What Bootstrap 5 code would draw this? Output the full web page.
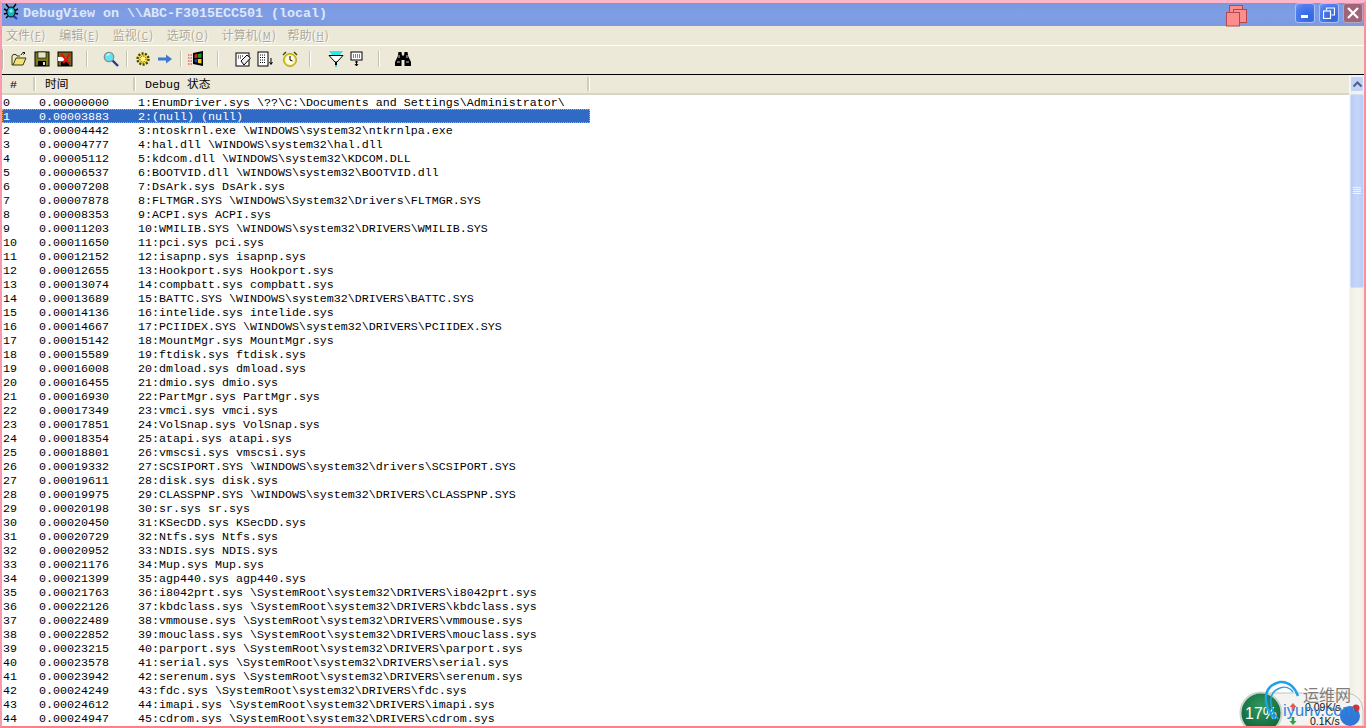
<!DOCTYPE html>
<html lang="zh-CN">
<head>
<meta charset="utf-8">
<title>DebugView</title>
<link href="https://cdn.jsdelivr.net/npm/bootstrap@5.3.0/dist/css/bootstrap.min.css" rel="stylesheet">
<style>
html,body{height:100%;overflow:hidden;background:#fff}
.dv-window{height:728px;width:1366px;position:relative;overflow:hidden;background:#ece9d8;border-style:solid;border-width:3px 2px 2px 2px;border-color:#fcb6cb #fb8f9c #ff7f86 #fb9aae;font-family:"Liberation Mono","Noto Sans CJK SC",monospace;color:#000}
.dv-title{height:23px;flex:none;background:linear-gradient(180deg,#7b98df 0%,#7e9ee6 50%,#7c99e0 100%);padding-left:1px;padding-right:1px}
.dv-title-text{font-size:13.33px;font-weight:700;color:#dfe7fb;margin-left:3px;line-height:22px;white-space:nowrap}
.dv-stack{position:absolute;left:1224px;top:2px}
.dv-cap{width:20px;height:20px;border:1px solid #a9c0f0;border-radius:3px;background:radial-gradient(circle at 70% 75%,#2f63e0,#4f7df0 70%,#7f9ff0);display:flex;align-items:center;justify-content:center}
.dv-cap-close{background:#a06479;border-color:#b9a5bc}
.dv-menu{height:19px;flex:none;font-family:"Noto Sans CJK SC",sans-serif;font-size:12px;line-height:18px;color:#aca899;text-shadow:1px 1px 0 #fff;padding-left:4px}
.dv-mi{margin-right:13.5px;white-space:nowrap}
.dv-mi u{font-size:10px;padding:0 1px}
.dv-mi-w{margin-right:11.5px}
.dv-tools{height:29px;flex:none;border-top:1px solid #fff;padding:0 0 3px 1px;align-items:center}
.dv-grip{width:1px;height:20px;background:#fff;margin-right:7px;box-shadow:-1px 0 0 #bdb9a5}
.dv-sep{width:2px;height:16px;background:#c5c2b2;border-right:1px solid #fff;flex:none}
.dv-tools svg{flex:none}
.tg5{margin-left:5px}.tg6{margin-left:6px}.tg7{margin-left:7px}.tg9{margin-left:9px}.tg11{margin-left:11px}.tg13{margin-left:13px}.tg15{margin-left:15px}.tg16{margin-left:16px}.tg17{margin-left:17px}
.dv-main{border-top:1px solid #000;min-height:0}
.dv-head{height:20px;font-size:11.67px;border-bottom:2px solid #d8d5c4;flex:none}
.dv-hc{flex:none;height:14px;margin-top:2px;line-height:16px;border-right:2px solid #d0cdbc;box-shadow:1px 0 0 #fff;white-space:nowrap}
.dv-hc-a{width:33px;padding-left:8px}
.dv-hc-b{width:100px;padding-left:10px}
.dv-hc-c{width:454px;padding-left:10px}
.dv-list{background:#fff;min-height:0;overflow:hidden}
.dv-table{width:588px;table-layout:fixed;margin:0;--bs-table-bg:transparent;font-size:11.67px;line-height:12px}
.dv-table td{padding:2px 0 0;height:14px;white-space:nowrap;color:#000;border:0;box-shadow:none}
.dv-table td:nth-child(1){width:36px;padding-left:1px}
.dv-table td:nth-child(2){width:100px;padding-left:1px}
.dv-table tr.dv-sel td{background:#316ac5;color:#fff}
.dv-table tr.dv-sel{outline:1px dotted #e6a24c;outline-offset:-1px}
.dv-scroll{width:15px;flex:none;background:linear-gradient(90deg,#f1efe4,#f7f6ee 60%,#efede1);border-left:1px solid #f8f7f0}
.dv-sb-btn{height:16px;margin-top:1px;border:1px solid #eef3fe;border-radius:2px;background:#c3d3f8;display:flex;align-items:center;justify-content:center}
.dv-sb-thumb{height:194px;margin-top:2px;background:linear-gradient(90deg,#b7ccf7,#c6d6fa 50%,#b9cdf7);border:1px solid #d2dffb;border-radius:2px;display:flex;align-items:center;justify-content:center}
.dv-overlay{position:absolute;right:0;bottom:0;display:block}
</style>
</head>
<body class="m-0">
<div class="dv-window d-flex flex-column">
  <div class="dv-title d-flex align-items-start">
    <svg width="17" height="17" viewBox="0 0 17 17" class="mt-0"><g stroke="#000" stroke-width="1.4" fill="none"><path d="M3 1l3 4M13 1l-3 4M1 6l4 2M15 6l-4 2M1 11l4-1M15 11l-4-1M3 15l3-3M12 15l-2-3"/></g><ellipse cx="8" cy="9" rx="4.2" ry="5" fill="#17b5b8" stroke="#000"/><circle cx="8" cy="8" r="1.8" fill="#7cf0ea"/><path d="M11 13l3 3" stroke="#1c3fd0" stroke-width="2"/></svg>
    <span class="dv-title-text">DebugView on \\ABC-F3015ECC501 (local)</span>
    <span class="ms-auto d-flex gap-1 align-items-start me-0">
      <span class="dv-cap"><svg width="10" height="10" viewBox="0 0 10 10"><rect x="1" y="7" width="7" height="3" fill="#fff"/></svg></span>
      <span class="dv-cap"><svg width="12" height="12" viewBox="0 0 12 12" fill="none" stroke="#fff"><rect x="0.5" y="4" width="7" height="7.5" stroke-width="1.2"/><path d="M3.5 3V1H11.5V8H8.5" stroke-width="1.2"/></svg></span>
      <span class="dv-cap dv-cap-close"><svg width="12" height="12" viewBox="0 0 12 12"><path d="M1 1l10 10M11 1L1 11" stroke="#fff" stroke-width="2.2"/></svg></span>
    </span>
  </div>
  <svg class="dv-stack" width="22" height="22" viewBox="0 0 22 22"><g fill="#fb8d8d" stroke="#b04a50"><rect x="3.5" y="0.5" width="13" height="12"/><rect x="7.5" y="4.5" width="13" height="13"/><rect x="0.5" y="7.5" width="13" height="13.5"/></g></svg>

  <div class="dv-menu d-flex">
    <span class="dv-mi">文件(<u>F</u>)</span>
    <span class="dv-mi">编辑(<u>E</u>)</span>
    <span class="dv-mi">监视(<u>C</u>)</span>
    <span class="dv-mi">选项(<u>O</u>)</span>
    <span class="dv-mi dv-mi-w">计算机(<u>M</u>)</span>
    <span class="dv-mi">帮助(<u>H</u>)</span>
  </div>

  <div class="dv-tools d-flex">
    <span class="dv-grip"></span>
    <svg width="16" height="16" viewBox="0 0 16 16"><path d="M1 5V14H12L15 7H5L2 14" fill="#f2e27a" stroke="#3c3a10"/><path d="M1 5l1-1.500h3l1 1.500h3" fill="#f2e27a" stroke="#3c3a10"/><path d="M10 4c1-2 2-3 4-2M14 2l-1.500 1.500M14 2l-2-.5" fill="none" stroke="#000"/></svg>
    <svg class="tg7" width="16" height="16" viewBox="0 0 16 16"><rect x="1" y="1" width="14" height="14" fill="#7c7a20" stroke="#000"/><rect x="4" y="1" width="8" height="6" fill="#e6e4c8" stroke="#000" stroke-width=".6"/><rect x="4" y="10" width="8" height="5" fill="#000"/><rect x="9" y="11" width="2" height="3" fill="#ddd"/></svg>
    <svg class="tg7" width="16" height="16" viewBox="0 0 16 16"><rect x="1" y="1" width="14" height="14" fill="#6d6b1d" stroke="#000"/><rect x="1" y="6" width="8" height="4" fill="#fff"/><rect x="4" y="11" width="8" height="4" fill="#000"/><path d="M4 3l9 10M13 3L6 12" stroke="#e01010" stroke-width="2.200"/></svg>
    <span class="dv-sep tg13"></span>
    <svg class="tg15" width="16" height="16" viewBox="0 0 16 16"><path d="M9.500 9.500L15 15" stroke="#1f3c9c" stroke-width="2.400"/><circle cx="6" cy="6" r="4.700" fill="#5fe6f0" stroke="#8a8a8a" stroke-width="1.300"/><path d="M4 5a2.500 2.500 0 0 1 3-2" stroke="#fff" fill="none"/></svg>
    <span class="dv-sep tg7"></span>
    <svg class="tg7" width="16" height="16" viewBox="0 0 16 16"><circle cx="8" cy="8" r="5.500" fill="#f3dc3c" stroke="#4b4300" stroke-dasharray="2 1.400" stroke-width="2.400"/><circle cx="8" cy="8" r="3" fill="#fff58a" stroke="#4b4300" stroke-dasharray="1 1"/></svg>
    <svg class="tg6" width="16" height="16" viewBox="0 0 16 16"><path d="M1 6.500H9V3.500L15 8L9 12.500V9.500H1Z" fill="#3f78d0"/></svg>
    <span class="dv-sep tg7"></span>
    <svg class="tg6" width="16" height="16" viewBox="0 0 16 16"><path d="M5 2L15 0V15L5 13Z" fill="#000"/><path d="M6.500 3.500l3-.5v4h-3z" fill="#e02020"/><path d="M10 3l3.500-.7v4.500H10z" fill="#1d9a1d"/><path d="M6.500 8h3v3.500l-3-.4z" fill="#1e3dd0"/><path d="M10 8h3.500v4.500L10 12z" fill="#f0d020"/><path d="M0 4h4M0 7h4M0 10h4M0 13h4" stroke="#e02020" stroke-dasharray="1.500 1"/></svg>
    <span class="dv-sep tg13"></span>
    <svg class="tg16" width="16" height="16" viewBox="0 0 16 16"><rect x="1" y="2" width="13" height="13" fill="#fff" stroke="#000"/><path d="M3 5h5M3 7h4" stroke="#000" stroke-dasharray="1 1"/><path d="M6 10l6-6 3.500 3L9 14z" fill="#eee" stroke="#000"/></svg>
    <svg class="tg6" width="16" height="16" viewBox="0 0 16 16"><rect x="1" y="1" width="10" height="14" fill="#fff" stroke="#000"/><path d="M3 4h6M3 6.500h6M3 9h6M3 11.500h6" stroke="#000" stroke-dasharray="1 1"/><path d="M14 7v6M12.500 11l1.500 2.500 1.500-2.500" stroke="#000" fill="none"/></svg>
    <svg class="tg9" width="16" height="16" viewBox="0 0 16 16"><circle cx="8" cy="9" r="5.700" fill="#fffbe0" stroke="#e3cf1c" stroke-width="1.600"/><circle cx="8" cy="9" r="6.500" fill="none" stroke="#6d6400" stroke-width=".5"/><path d="M8 5v4l2.500 1" stroke="#000" fill="none"/><path d="M1 4l3-3M15 4l-3-3" stroke="#4f4a00" stroke-width="1.500"/></svg>
    <span class="dv-sep tg11"></span>
    <svg class="tg17" width="16" height="16" viewBox="0 0 16 16"><path d="M1 0h14l-3 4H4z" fill="#2fe6ea"/><path d="M1 4.500h14L9 11H7z" fill="#fff" stroke="#000"/><path d="M7 11h2v3H7z" fill="#000"/><path d="M7 14h2v2H7z" fill="#2fd8e6"/></svg>
    <svg class="tg5" width="16" height="16" viewBox="0 0 16 16"><rect x="2" y="1" width="11" height="8" fill="#fff" stroke="#000"/><path d="M4 4h7M4 6h7" stroke="#000" stroke-dasharray="1 1"/><path d="M7.500 10v5M6 13l1.500 2 1.500-2M6 11h3" stroke="#000" fill="none"/></svg>
    <span class="dv-sep tg13"></span>
    <svg class="tg15" width="16" height="16" viewBox="0 0 16 16"><path d="M3.500 1h3l.5 3.500h2L9.500 1h3l.8 4.500L16 11v4H9.500V9h-3v6H0v-4l2.700-5.500z" fill="#000"/><path d="M4 4v3M12 4v3M2 11h3M11 11h3" stroke="#fff" stroke-width=".8"/></svg>
  </div>

  <div class="dv-main d-flex flex-grow-1">
    <div class="flex-grow-1 d-flex flex-column">
      <div class="dv-head d-flex">
        <span class="dv-hc dv-hc-a">#</span>
        <span class="dv-hc dv-hc-b">时间</span>
        <span class="dv-hc dv-hc-c">Debug 状态</span>
      </div>
      <div class="dv-list flex-grow-1">
        <table class="table table-borderless dv-table">
          <tbody>
<tr><td>0</td><td>0.00000000</td><td>1:EnumDriver.sys \??\C:\Documents and Settings\Administrator\</td></tr>
<tr class="dv-sel"><td>1</td><td>0.00003883</td><td>2:(null) (null)</td></tr>
<tr><td>2</td><td>0.00004442</td><td>3:ntoskrnl.exe \WINDOWS\system32\ntkrnlpa.exe</td></tr>
<tr><td>3</td><td>0.00004777</td><td>4:hal.dll \WINDOWS\system32\hal.dll</td></tr>
<tr><td>4</td><td>0.00005112</td><td>5:kdcom.dll \WINDOWS\system32\KDCOM.DLL</td></tr>
<tr><td>5</td><td>0.00006537</td><td>6:BOOTVID.dll \WINDOWS\system32\BOOTVID.dll</td></tr>
<tr><td>6</td><td>0.00007208</td><td>7:DsArk.sys DsArk.sys</td></tr>
<tr><td>7</td><td>0.00007878</td><td>8:FLTMGR.SYS \WINDOWS\System32\Drivers\FLTMGR.SYS</td></tr>
<tr><td>8</td><td>0.00008353</td><td>9:ACPI.sys ACPI.sys</td></tr>
<tr><td>9</td><td>0.00011203</td><td>10:WMILIB.SYS \WINDOWS\system32\DRIVERS\WMILIB.SYS</td></tr>
<tr><td>10</td><td>0.00011650</td><td>11:pci.sys pci.sys</td></tr>
<tr><td>11</td><td>0.00012152</td><td>12:isapnp.sys isapnp.sys</td></tr>
<tr><td>12</td><td>0.00012655</td><td>13:Hookport.sys Hookport.sys</td></tr>
<tr><td>13</td><td>0.00013074</td><td>14:compbatt.sys compbatt.sys</td></tr>
<tr><td>14</td><td>0.00013689</td><td>15:BATTC.SYS \WINDOWS\system32\DRIVERS\BATTC.SYS</td></tr>
<tr><td>15</td><td>0.00014136</td><td>16:intelide.sys intelide.sys</td></tr>
<tr><td>16</td><td>0.00014667</td><td>17:PCIIDEX.SYS \WINDOWS\system32\DRIVERS\PCIIDEX.SYS</td></tr>
<tr><td>17</td><td>0.00015142</td><td>18:MountMgr.sys MountMgr.sys</td></tr>
<tr><td>18</td><td>0.00015589</td><td>19:ftdisk.sys ftdisk.sys</td></tr>
<tr><td>19</td><td>0.00016008</td><td>20:dmload.sys dmload.sys</td></tr>
<tr><td>20</td><td>0.00016455</td><td>21:dmio.sys dmio.sys</td></tr>
<tr><td>21</td><td>0.00016930</td><td>22:PartMgr.sys PartMgr.sys</td></tr>
<tr><td>22</td><td>0.00017349</td><td>23:vmci.sys vmci.sys</td></tr>
<tr><td>23</td><td>0.00017851</td><td>24:VolSnap.sys VolSnap.sys</td></tr>
<tr><td>24</td><td>0.00018354</td><td>25:atapi.sys atapi.sys</td></tr>
<tr><td>25</td><td>0.00018801</td><td>26:vmscsi.sys vmscsi.sys</td></tr>
<tr><td>26</td><td>0.00019332</td><td>27:SCSIPORT.SYS \WINDOWS\system32\drivers\SCSIPORT.SYS</td></tr>
<tr><td>27</td><td>0.00019611</td><td>28:disk.sys disk.sys</td></tr>
<tr><td>28</td><td>0.00019975</td><td>29:CLASSPNP.SYS \WINDOWS\system32\DRIVERS\CLASSPNP.SYS</td></tr>
<tr><td>29</td><td>0.00020198</td><td>30:sr.sys sr.sys</td></tr>
<tr><td>30</td><td>0.00020450</td><td>31:KSecDD.sys KSecDD.sys</td></tr>
<tr><td>31</td><td>0.00020729</td><td>32:Ntfs.sys Ntfs.sys</td></tr>
<tr><td>32</td><td>0.00020952</td><td>33:NDIS.sys NDIS.sys</td></tr>
<tr><td>33</td><td>0.00021176</td><td>34:Mup.sys Mup.sys</td></tr>
<tr><td>34</td><td>0.00021399</td><td>35:agp440.sys agp440.sys</td></tr>
<tr><td>35</td><td>0.00021763</td><td>36:i8042prt.sys \SystemRoot\system32\DRIVERS\i8042prt.sys</td></tr>
<tr><td>36</td><td>0.00022126</td><td>37:kbdclass.sys \SystemRoot\system32\DRIVERS\kbdclass.sys</td></tr>
<tr><td>37</td><td>0.00022489</td><td>38:vmmouse.sys \SystemRoot\system32\DRIVERS\vmmouse.sys</td></tr>
<tr><td>38</td><td>0.00022852</td><td>39:mouclass.sys \SystemRoot\system32\DRIVERS\mouclass.sys</td></tr>
<tr><td>39</td><td>0.00023215</td><td>40:parport.sys \SystemRoot\system32\DRIVERS\parport.sys</td></tr>
<tr><td>40</td><td>0.00023578</td><td>41:serial.sys \SystemRoot\system32\DRIVERS\serial.sys</td></tr>
<tr><td>41</td><td>0.00023942</td><td>42:serenum.sys \SystemRoot\system32\DRIVERS\serenum.sys</td></tr>
<tr><td>42</td><td>0.00024249</td><td>43:fdc.sys \SystemRoot\system32\DRIVERS\fdc.sys</td></tr>
<tr><td>43</td><td>0.00024612</td><td>44:imapi.sys \SystemRoot\system32\DRIVERS\imapi.sys</td></tr>
<tr><td>44</td><td>0.00024947</td><td>45:cdrom.sys \SystemRoot\system32\DRIVERS\cdrom.sys</td></tr>
          </tbody>
        </table>
      </div>
    </div>
    <div class="dv-scroll">
      <div class="dv-sb-btn"><svg width="9" height="7" viewBox="0 0 9 7"><path d="M0.500 5.500L4.500 1.500L8.500 5.500" fill="none" stroke="#4d6185" stroke-width="2"/></svg></div>
      <div class="dv-sb-thumb"><svg width="8" height="8" viewBox="0 0 8 8"><path d="M0 .5h8M0 2.500h8M0 4.500h8M0 6.500h8" stroke="#eef3fe"/></svg></div>
    </div>
  </div>

  <svg class="dv-overlay" width="128" height="46" viewBox="1236 680 128 46">
    <defs><radialGradient id="dvgreen" cx=".5" cy=".35" r=".7"><stop offset="0" stop-color="#2f9a5e"/><stop offset="1" stop-color="#0d5d36"/></radialGradient></defs>
    <path d="M1262 693H1347Q1362 695 1363 710V726H1262Z" fill="#f3f3f1" stroke="#c4c4bf"/>
    <circle cx="1261" cy="713" r="20.500" fill="url(#dvgreen)" stroke="#c9d3cc" stroke-width="2"/>
    <text x="1261" y="719" text-anchor="middle" fill="#fff" font-family="'Liberation Sans',sans-serif" font-size="16">17%</text>
    <path d="M1293 703l-3.500 4h2.200v4h2.600v-4h2.200z" fill="#e25a4a"/>
    <path d="M1293 725l-3.500-4h2.200v-4h2.600v4h2.200z" fill="#2e9e4a"/>
    <circle cx="1350" cy="716" r="10" fill="#2f78d8"/>
    <circle cx="1356" cy="708" r="3.500" fill="#d82f3a"/>
    <text x="1305" y="711" fill="#111" font-family="'Liberation Sans',sans-serif" font-size="10.500">0.09K/s</text>
    <text x="1310" y="725" fill="#111" font-family="'Liberation Sans',sans-serif" font-size="10.500">0.1K/s</text>
    <path d="M1275 719C1262 705 1262 686 1280 682C1288 681 1295 687 1298 696" fill="none" stroke="#22a0e6" stroke-width="2.500"/>
    <path d="M1278 719C1268 706 1268 692 1280 688C1285 686 1290 688 1293 692" fill="none" stroke="#22a0e6" stroke-width="1.500"/>
    <text x="1303" y="701" fill="#7d7d7d" font-family="'Noto Sans CJK SC',sans-serif" font-size="16">运维网</text>
    <text x="1283" y="716" fill="#2a86d8" font-family="'Liberation Sans',sans-serif" font-size="16.500">iyunv.com</text>
  </svg>
</div>
<script src="https://cdn.jsdelivr.net/npm/bootstrap@5.3.0/dist/js/bootstrap.bundle.min.js"></script>
</body>
</html>
